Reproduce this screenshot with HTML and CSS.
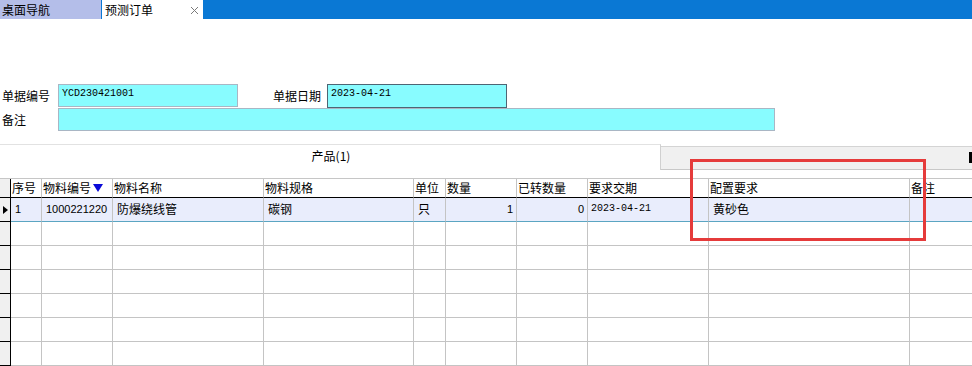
FILE: index.html
```html
<!DOCTYPE html>
<html lang="zh-CN">
<head>
<meta charset="utf-8">
<title>预测订单</title>
<link rel="stylesheet" href="styles.css">
</head>
<body>
<div class="topbar">
  <div class="tab tab-home">桌面导航</div>
  <div class="tab tab-active">预测订单<svg class="close" width="9" height="9" viewBox="0 0 9 9"><path d="M1 1L8 8M8 1L1 8" stroke="#7a7a7a" stroke-width="1" fill="none"/></svg></div>
</div>

<div class="form">
  <div class="frow">
    <span class="lbl">单据编号</span>
    <div class="inp inp-no">YCD230421001</div>
    <span class="lbl lbl2">单据日期</span>
    <div class="inp inp-date">2023-04-21</div>
  </div>
  <div class="frow">
    <span class="lbl">备注</span>
    <div class="inp inp-note"></div>
  </div>
</div>

<div class="tabstrip">
  <div class="ptab">产品(1)</div>
  <div class="pfill"><span class="pmark"></span></div>
</div>

<div class="grid">
  <div class="c rh hd"></div>
  <div class="c hd">序号</div>
  <div class="c hd">物料编号<svg class="sort" width="10" height="8" viewBox="0 0 10 8"><path d="M0 0H10L5 8Z" fill="#0a0ad8"/></svg></div>
  <div class="c hd">物料名称</div>
  <div class="c hd">物料规格</div>
  <div class="c hd">单位</div>
  <div class="c hd">数量</div>
  <div class="c hd">已转数量</div>
  <div class="c hd">要求交期</div>
  <div class="c hd">配置要求</div>
  <div class="c hd last">备注</div>

  <div class="c rh sel"><svg class="mark" width="5" height="8" viewBox="0 0 5 8"><path d="M0 0L5 4L0 8Z" fill="#000"/></svg></div>
  <div class="c sel num-l">1</div>
  <div class="c sel num-l">1000221220</div>
  <div class="c sel">防爆绕线管</div>
  <div class="c sel">碳钢</div>
  <div class="c sel">只</div>
  <div class="c sel num">1</div>
  <div class="c sel num">0</div>
  <div class="c sel mono">2023-04-21</div>
  <div class="c sel">黄砂色</div>
  <div class="c sel last"></div>

  <div class="c rh"></div><div class="c"></div><div class="c"></div><div class="c"></div><div class="c"></div><div class="c"></div><div class="c"></div><div class="c"></div><div class="c"></div><div class="c"></div><div class="c last"></div>
  <div class="c rh"></div><div class="c"></div><div class="c"></div><div class="c"></div><div class="c"></div><div class="c"></div><div class="c"></div><div class="c"></div><div class="c"></div><div class="c"></div><div class="c last"></div>
  <div class="c rh"></div><div class="c"></div><div class="c"></div><div class="c"></div><div class="c"></div><div class="c"></div><div class="c"></div><div class="c"></div><div class="c"></div><div class="c"></div><div class="c last"></div>
  <div class="c rh"></div><div class="c"></div><div class="c"></div><div class="c"></div><div class="c"></div><div class="c"></div><div class="c"></div><div class="c"></div><div class="c"></div><div class="c"></div><div class="c last"></div>
  <div class="c rh"></div><div class="c"></div><div class="c"></div><div class="c"></div><div class="c"></div><div class="c"></div><div class="c"></div><div class="c"></div><div class="c"></div><div class="c"></div><div class="c last"></div>
  <div class="c rh"></div><div class="c"></div><div class="c"></div><div class="c"></div><div class="c"></div><div class="c"></div><div class="c"></div><div class="c"></div><div class="c"></div><div class="c"></div><div class="c last"></div>
</div>

<div class="highlight"></div>
</body>
</html>
```

FILE: styles.css
```css
* { box-sizing: border-box; }
html, body { margin: 0; padding: 0; }
body {
  width: 972px;
  height: 366px;
  overflow: hidden;
  position: relative;
  background: #fff;
  font-family: "Noto Sans CJK SC", "Liberation Sans", sans-serif;
  font-size: 12px;
  color: #000;
}

/* top tab bar */
.topbar {
  display: flex;
  height: 19px;
  background: #0a78d4;
}
.tab {
  height: 19px;
  line-height: 19px;
  padding-left: 2px;
  font-size: 12px;
}
.tab-home {
  width: 101px;
  margin-right: 1px;
  background: #b4bee9;
}
.tab-active {
  width: 101px;
  background: #fff;
  display: flex;
  align-items: center;
  padding-left: 3px;
}
.close { margin-left: auto; margin-right: 4px; margin-top: 2px; }

/* form */
.form { margin-top: 65px; }
.frow { display: flex; align-items: flex-start; }
.lbl {
  width: 58px;
  padding-left: 2px;
  line-height: 23px;
  height: 23px;
}
.lbl2 { margin-left: 35px; width: 54px; padding-left: 0; }
.inp {
  background: #88fcff;
  border: 1px solid #a9b6c4;
  height: 23px;
  font-family: "Liberation Mono", monospace;
  font-size: 10px;
  line-height: 18px;
  padding-left: 3px;
}
.inp-no { width: 180px; }
.inp-date { width: 180px; height: 24px; border-color: #4e6574; }
.inp-note { width: 717px; }

/* product tab strip */
.tabstrip {
  display: flex;
  margin-top: 13px;
  height: 26px;
}
.ptab {
  width: 661px;
  height: 26px;
  border-top: 1px solid #e2e2e2;
  border-right: 1px solid #d0d0d0;
  text-align: center;
  line-height: 22px;
  padding-left: 2px;
}
.pfill {
  flex: 1;
  margin-top: 2px;
  height: 24px;
  background: #f0f0f0;
  border-top: 1px solid #d4d4d4;
  border-bottom: 1px solid #c8c8c8;
  display: flex;
  justify-content: flex-end;
  align-items: flex-start;
}
.pmark {
  width: 3px;
  height: 11px;
  margin-top: 5px;
  background: #000;
}

/* grid */
.grid {
  margin-top: 8px;
  border-top: 1px solid #c6c6c6;
  display: grid;
  grid-template-columns: 11px 31px 71px 151px 150px 32px 71px 71px 121px 201px 1fr;
  grid-auto-rows: 24px;
  grid-template-rows: 19px;
}
.c {
  border-right: 1px solid #c4c4c4;
  border-bottom: 1px solid #c4c4c4;
  padding-left: 4px;
  line-height: 22px;
  white-space: nowrap;
  overflow: hidden;
}
.c.last { border-right: none; }
.hd {
  border-bottom-color: #000;
  padding-left: 1px;
  line-height: 18px;
  display: flex;
  align-items: center;
}
.sort { margin-left: 2px; margin-top: -1px; }
.rh {
  background: #f0f0f0;
  border-right: 1px solid #000;
  border-bottom-color: #000;
  padding-left: 0;
}
.rh.hd { border-bottom-color: #000; }
.sel {
  background: #e9edfc;
  border-bottom-color: #5ba5c2;
}
.rh.sel {
  background: #f0f0f0;
  border-bottom-color: #000;
  display: flex;
  align-items: center;
  padding-left: 3px;
}
.num-l {
  font-family: "Liberation Sans", sans-serif;
  font-size: 11px;
}
.num {
  font-family: "Liberation Sans", sans-serif;
  font-size: 11px;
  text-align: right;
  padding-right: 3px;
}
.mono {
  font-family: "Liberation Mono", monospace;
  font-size: 10px;
  padding-left: 3px;
}

/* annotation box */
.highlight {
  position: absolute;
  left: 690px;
  top: 159px;
  width: 236px;
  height: 82px;
  border: 3px solid #e53b3b;
}
```
